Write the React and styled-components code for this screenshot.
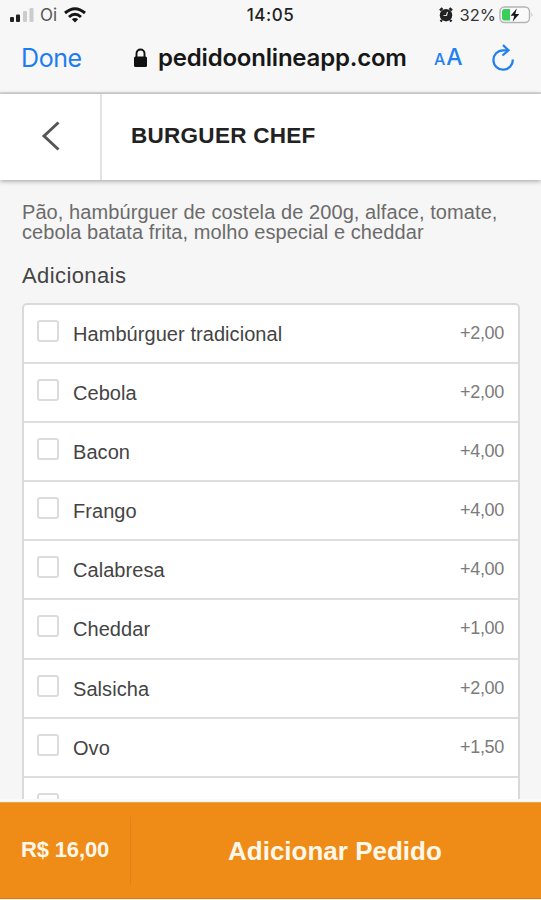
import React from "react";
import styled, { createGlobalStyle } from "styled-components";

const GlobalStyle = createGlobalStyle`
  * { box-sizing: border-box; }
  body {
    margin: 0;
    background: #f6f6f6;
    font-family: "Liberation Sans", Arial, sans-serif;
  }
`;

const Screen = styled.div`
  display: flex;
  flex-direction: column;
  width: 541px;
  height: 900px;
  overflow: hidden;
  background: #f6f6f6;
`;

const Browser = styled.header`
  flex: none;
  height: 94px;
  background: #f7f7f7;
  border-bottom: 2px solid #dcdcdc;
  font-family: Inter, "Liberation Sans", sans-serif;
`;

const StatusBar = styled.div`
  display: grid;
  grid-template-columns: 1fr auto 1fr;
  align-items: center;
  height: 30px;
  padding: 0 7px 0 9px;
  color: #222;
`;

const StatusGroup = styled.div`
  display: flex;
  align-items: center;
  justify-content: ${(p) => (p.$end ? "flex-end" : "flex-start")};
`;

const Carrier = styled.span`
  margin: 0 7px 0 6px;
  font-size: 17px;
  line-height: 30px;
  color: #555;
`;

const Clock = styled.span`
  margin-right: 2px;
  font-size: 17px;
  font-weight: 500;
  letter-spacing: 0.5px;
  line-height: 30px;
`;

const Percent = styled.span`
  margin: 0 3px 0 7px;
  font-size: 16.5px;
  line-height: 30px;
  color: #333;
`;

const AddressBar = styled.div`
  display: flex;
  align-items: center;
  height: 55px;
  padding: 0 25px 0 21px;
`;

const Done = styled.span`
  width: 112px;
  font-size: 25px;
  letter-spacing: -0.4px;
  color: #1c7df0;
`;

const Domain = styled.span`
  width: 276px;
  margin-left: 10px;
  font-size: 24px;
  font-weight: 600;
  letter-spacing: -0.2px;
  color: #171717;
  white-space: nowrap;
`;

const TextSize = styled.span`
  display: flex;
  align-items: baseline;
  gap: 1px;
  width: 56px;
  color: #2380ef;
  font-size: 23px;
  font-weight: 500;
  line-height: 30px;
`;

const SmallA = styled.span`
  font-size: 16px;
`;

const TitleBar = styled.div`
  flex: none;
  display: flex;
  height: 86px;
  background: #fff;
  box-shadow: 0 1px 5px rgba(0, 0, 0, 0.36);
`;

const Back = styled.div`
  display: flex;
  align-items: center;
  width: 102px;
  padding: 0 0 2px 41px;
  border-right: 2px solid #e2e2e2;
`;

const Title = styled.h1`
  margin: 0 0 0 29px;
  font-size: 22.5px;
  line-height: 83px;
  letter-spacing: 0.28px;
  color: #222;
`;

const Content = styled.main`
  flex: 1;
  min-height: 0;
  overflow: hidden;
  padding: 22px 21px 0 22px;
`;

const Description = styled.p`
  margin: 0;
  font-size: 20px;
  line-height: 20px;
  letter-spacing: 0.08px;
  color: #6b6b6b;
  white-space: nowrap;
`;

const Heading = styled.h2`
  margin: 21px 0 0;
  font-size: 22px;
  font-weight: 400;
  line-height: 26px;
  letter-spacing: 0.4px;
  color: #444;
`;

const Options = styled.ul`
  margin: 14px 0 0;
  padding: 0;
  list-style: none;
  background: #fff;
  border: 2px solid #dadada;
  border-radius: 5px;
`;

const Option = styled.li`
  display: flex;
  height: 59.1px;
  padding: 0 14px 0 13px;
  border-bottom: 2px solid #dedede;
`;

const Checkbox = styled.span`
  width: 22px;
  height: 22px;
  margin-top: 15px;
  border: 2px solid #dcdcdc;
  border-radius: 3px;
`;

const Label = styled.span`
  flex: 1;
  margin-left: 14px;
  font-size: 20px;
  line-height: 59px;
  letter-spacing: 0.06px;
  color: #444;
`;

const Price = styled.span`
  font-size: 18px;
  line-height: 56px;
  letter-spacing: -0.3px;
  color: #7b7b7b;
`;

const OrderBar = styled.footer`
  flex: none;
  display: flex;
  align-items: center;
  height: 101px;
  background: #ef8c18;
  background-clip: padding-box;
  border-top: 3px solid #fcfaf7;
  border-bottom: 1px solid #fff6ec;
  box-shadow: inset 0 1px #f0a046, inset 0 -1px #dc7415;
  color: #fff8ea;
  font-weight: 700;
`;

const Total = styled.div`
  width: 131px;
  height: 68px;
  padding-left: 21px;
  border-right: 1px solid #dc8320;
  font-size: 22px;
  line-height: 66px;
  letter-spacing: -0.15px;
  white-space: nowrap;
`;

const AddButton = styled.div`
  flex: 1;
  padding-left: 97px;
  font-size: 26px;
  line-height: 68px;
  white-space: nowrap;
`;

const items = [
  ["Hambúrguer tradicional", "+2,00"],
  ["Cebola", "+2,00"],
  ["Bacon", "+4,00"],
  ["Frango", "+4,00"],
  ["Calabresa", "+4,00"],
  ["Cheddar", "+1,00"],
  ["Salsicha", "+2,00"],
  ["Ovo", "+1,50"],
  ["", ""],
];

const SignalIcon = () => (
  <svg width="25" height="16" viewBox="0 0 25 16">
    <rect x="1" y="10" width="4" height="5" rx="1" fill="#222" />
    <rect x="7" y="7.5" width="4" height="7.5" rx="1" fill="#222" />
    <rect x="14" y="4" width="4" height="11" rx="1" fill="#ccc" />
    <rect x="20.5" y="1" width="4" height="14" rx="1" fill="#ccc" />
  </svg>
);

const WifiIcon = () => (
  <svg width="22" height="16" viewBox="0 0 22 16" fill="none" stroke="#161616" strokeWidth="3">
    <path d="M1 6Q11-2.600 21 6M5 10Q11 4.600 17 10" />
    <path d="M11 15.500L7.800 12.300Q11 9.800 14.200 12.300Z" fill="#161616" stroke="none" />
  </svg>
);

const AlarmIcon = () => (
  <svg width="14" height="16" viewBox="0 0 14 16">
    <path d="M1 3.500L3.500 1.200M13 3.500L10.500 1.200M3 13L1.500 14.500M11 13L12.500 14.500" stroke="#222" strokeWidth="2.400" />
    <circle cx="7" cy="8.200" r="6.200" fill="#222" />
    <path d="M8.500 5L7.500 8.500H4.500" fill="none" stroke="#ddd" strokeWidth="1.200" />
  </svg>
);

const BatteryIcon = () => (
  <svg width="35" height="18" viewBox="0 0 35 18">
    <rect x="1" y="1" width="29.500" height="15.500" rx="4.500" fill="#fafafa" stroke="#b4b4b4" strokeWidth="1.400" />
    <path d="M5.500 3H11V14.500H5.500Q3 14.500 3 12V5.500Q3 3 5.500 3Z" fill="#37cf59" />
    <path d="M17.800 2.500L11.500 9.800H15.300L13.700 15.500L20.300 8H16.300Z" fill="#181818" />
    <path d="M32.500 6.500Q34.500 8.800 32.500 11Z" fill="#bbb" />
  </svg>
);

const LockIcon = () => (
  <svg width="15" height="20" viewBox="0 0 15 20">
    <rect x="1" y="8.500" width="13" height="10.500" rx="1.500" fill="#111" />
    <path d="M3.500 9V5.500a4 4 0 0 1 8 0V9" fill="none" stroke="#111" strokeWidth="1.900" />
  </svg>
);

const ReloadIcon = () => (
  <svg width="26" height="28" viewBox="0 0 26 28" fill="none" stroke="#2380ef" strokeWidth="2.300">
    <path d="M18.200 6.300H13A9.700 9.700 0 1 0 22.800 15.500" />
    <path d="M13 1L18.500 6.300L12.500 11.500" />
  </svg>
);

const BackIcon = () => (
  <svg width="20" height="30" viewBox="0 0 20 30">
    <path d="M17.500 1.500L3 15L17.500 28.500" fill="none" stroke="#555" strokeWidth="2.900" />
  </svg>
);

export default function App() {
  return (
    <Screen>
      <GlobalStyle />
      <Browser>
        <StatusBar>
          <StatusGroup>
            <SignalIcon />
            <Carrier>Oi</Carrier>
            <WifiIcon />
          </StatusGroup>
          <Clock>14:05</Clock>
          <StatusGroup $end>
            <AlarmIcon />
            <Percent>32%</Percent>
            <BatteryIcon />
          </StatusGroup>
        </StatusBar>
        <AddressBar>
          <Done>Done</Done>
          <LockIcon />
          <Domain>pedidoonlineapp.com</Domain>
          <TextSize>
            <SmallA>A</SmallA>A
          </TextSize>
          <ReloadIcon />
        </AddressBar>
      </Browser>
      <TitleBar>
        <Back>
          <BackIcon />
        </Back>
        <Title>BURGUER CHEF</Title>
      </TitleBar>
      <Content>
        <Description>
          Pão, hambúrguer de costela de 200g, alface, tomate,
          <br />
          cebola batata frita, molho especial e cheddar
        </Description>
        <Heading>Adicionais</Heading>
        <Options>
          {items.map(([name, price]) => (
            <Option key={name}>
              <Checkbox />
              <Label>{name}</Label>
              <Price>{price}</Price>
            </Option>
          ))}
        </Options>
      </Content>
      <OrderBar>
        <Total>R$ 16,00</Total>
        <AddButton>Adicionar Pedido</AddButton>
      </OrderBar>
    </Screen>
  );
}
